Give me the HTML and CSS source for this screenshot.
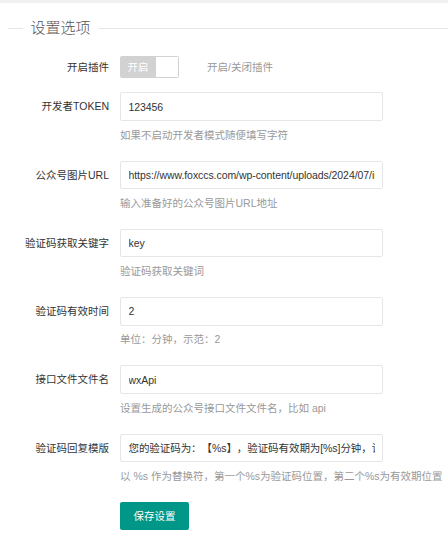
FILE: index.html
```html
<!DOCTYPE html>
<html lang="zh-CN">
<head>
<meta charset="utf-8">
<title>设置选项</title>
<link rel="stylesheet" href="styles.css">
</head>
<body>
<div class="topbar"></div>
<fieldset class="field-title">
  <legend>设置选项</legend>
</fieldset>
<form class="settings">
  <div class="row row-switch">
    <label class="label">开启插件</label>
    <div class="field field-inline">
      <div class="checkbox"><span class="checkbox-text">开启</span><i class="checkbox-box"></i></div>
      <div class="aux-inline">开启/关闭插件</div>
    </div>
  </div>
  <div class="row">
    <label class="label">开发者TOKEN</label>
    <div class="field">
      <input class="input" type="text" value="123456">
      <div class="aux">如果不启动开发者模式随便填写字符</div>
    </div>
  </div>
  <div class="row">
    <label class="label">公众号图片URL</label>
    <div class="field">
      <input class="input" type="text" value="https://www.foxccs.com/wp-content/uploads/2024/07/image.jpg">
      <div class="aux">输入准备好的公众号图片URL地址</div>
    </div>
  </div>
  <div class="row">
    <label class="label">验证码获取关键字</label>
    <div class="field">
      <input class="input" type="text" value="key">
      <div class="aux">验证码获取关键词</div>
    </div>
  </div>
  <div class="row">
    <label class="label">验证码有效时间</label>
    <div class="field">
      <input class="input" type="text" value="2">
      <div class="aux">单位：分钟，示范：2</div>
    </div>
  </div>
  <div class="row">
    <label class="label">接口文件文件名</label>
    <div class="field">
      <input class="input" type="text" value="wxApi">
      <div class="aux">设置生成的公众号接口文件文件名，比如 api</div>
    </div>
  </div>
  <div class="row">
    <label class="label">验证码回复模版</label>
    <div class="field">
      <input class="input" type="text" value="您的验证码为：【%s】，验证码有效期为[%s]分钟，请尽快使用。">
      <div class="aux">以 %s 作为替换符，第一个%s为验证码位置，第二个%s为有效期位置</div>
    </div>
  </div>
  <div class="actions">
    <button class="btn" type="button">保存设置</button>
  </div>
</form>
</body>
</html>
```
FILE: styles.css
```css
html, body {
  margin: 0;
  padding: 0;
  background: #fff;
  overflow: hidden;
}
body {
  font-family: "Liberation Sans", "Noto Sans CJK SC", sans-serif;
  font-size: 10.5px;
  color: #333;
  text-spacing-trim: space-all;
}
.topbar {
  height: 3px;
  background: #f0f0f0;
}
.field-title {
  margin: 14px 0 13.5px 8px;
  padding: 0;
  border: none;
  border-top: 1px solid #e6e6e6;
  min-width: 0;
}
.field-title legend {
  margin-left: 15px;
  padding: 0 7.5px;
  font-size: 15px;
  line-height: 22px;
  font-weight: 300;
  color: #555;
}
.settings {
  margin: 0;
}
.row {
  display: flex;
  align-items: flex-start;
  margin-bottom: 11.25px;
}
.label {
  flex: 0 0 120px;
  box-sizing: border-box;
  padding-right: 11px;
  text-align: right;
  line-height: 28.5px;
  white-space: nowrap;
  color: #333;
}
.field {
  flex: 1;
  min-width: 0;
}
.field-inline {
  display: flex;
  align-items: flex-start;
  height: 28.5px;
}
.checkbox {
  display: flex;
  margin-top: 3px;
  height: 22.5px;
  cursor: pointer;
}
.checkbox-text {
  display: block;
  padding: 0 7.5px;
  background: #d2d2d2;
  color: #fff;
  line-height: 22.5px;
  border-radius: 2px 0 0 2px;
}
.checkbox-box {
  display: block;
  width: 22.5px;
  box-sizing: border-box;
  border: 1px solid #d2d2d2;
  border-left: none;
  border-radius: 0 2px 2px 0;
  background: #fff;
}
.aux-inline {
  margin-left: 28.5px;
  line-height: 28.5px;
  color: #999;
  white-space: nowrap;
}
.input {
  display: block;
  width: 263px;
  height: 28.5px;
  box-sizing: border-box;
  margin: 0;
  padding: 0 7.5px;
  border: 1px solid #e6e6e6;
  border-radius: 2px;
  background: #fff;
  font-family: "Liberation Sans", "Noto Sans CJK SC", sans-serif;
  font-size: 10.5px;
  letter-spacing: -0.07px;
  text-spacing-trim: space-all;
  color: #333;
  outline: none;
}
.aux {
  padding: 6.75px 0;
  line-height: 15px;
  color: #999;
  white-space: nowrap;
}
.actions {
  padding-left: 120px;
}
.btn {
  display: inline-block;
  height: 28.5px;
  padding: 0 13.5px;
  border: none;
  border-radius: 2px;
  background: #009688;
  color: #fff;
  font-family: "Liberation Sans", "Noto Sans CJK SC", sans-serif;
  font-size: 10.5px;
  line-height: 28.5px;
  cursor: pointer;
}
```
